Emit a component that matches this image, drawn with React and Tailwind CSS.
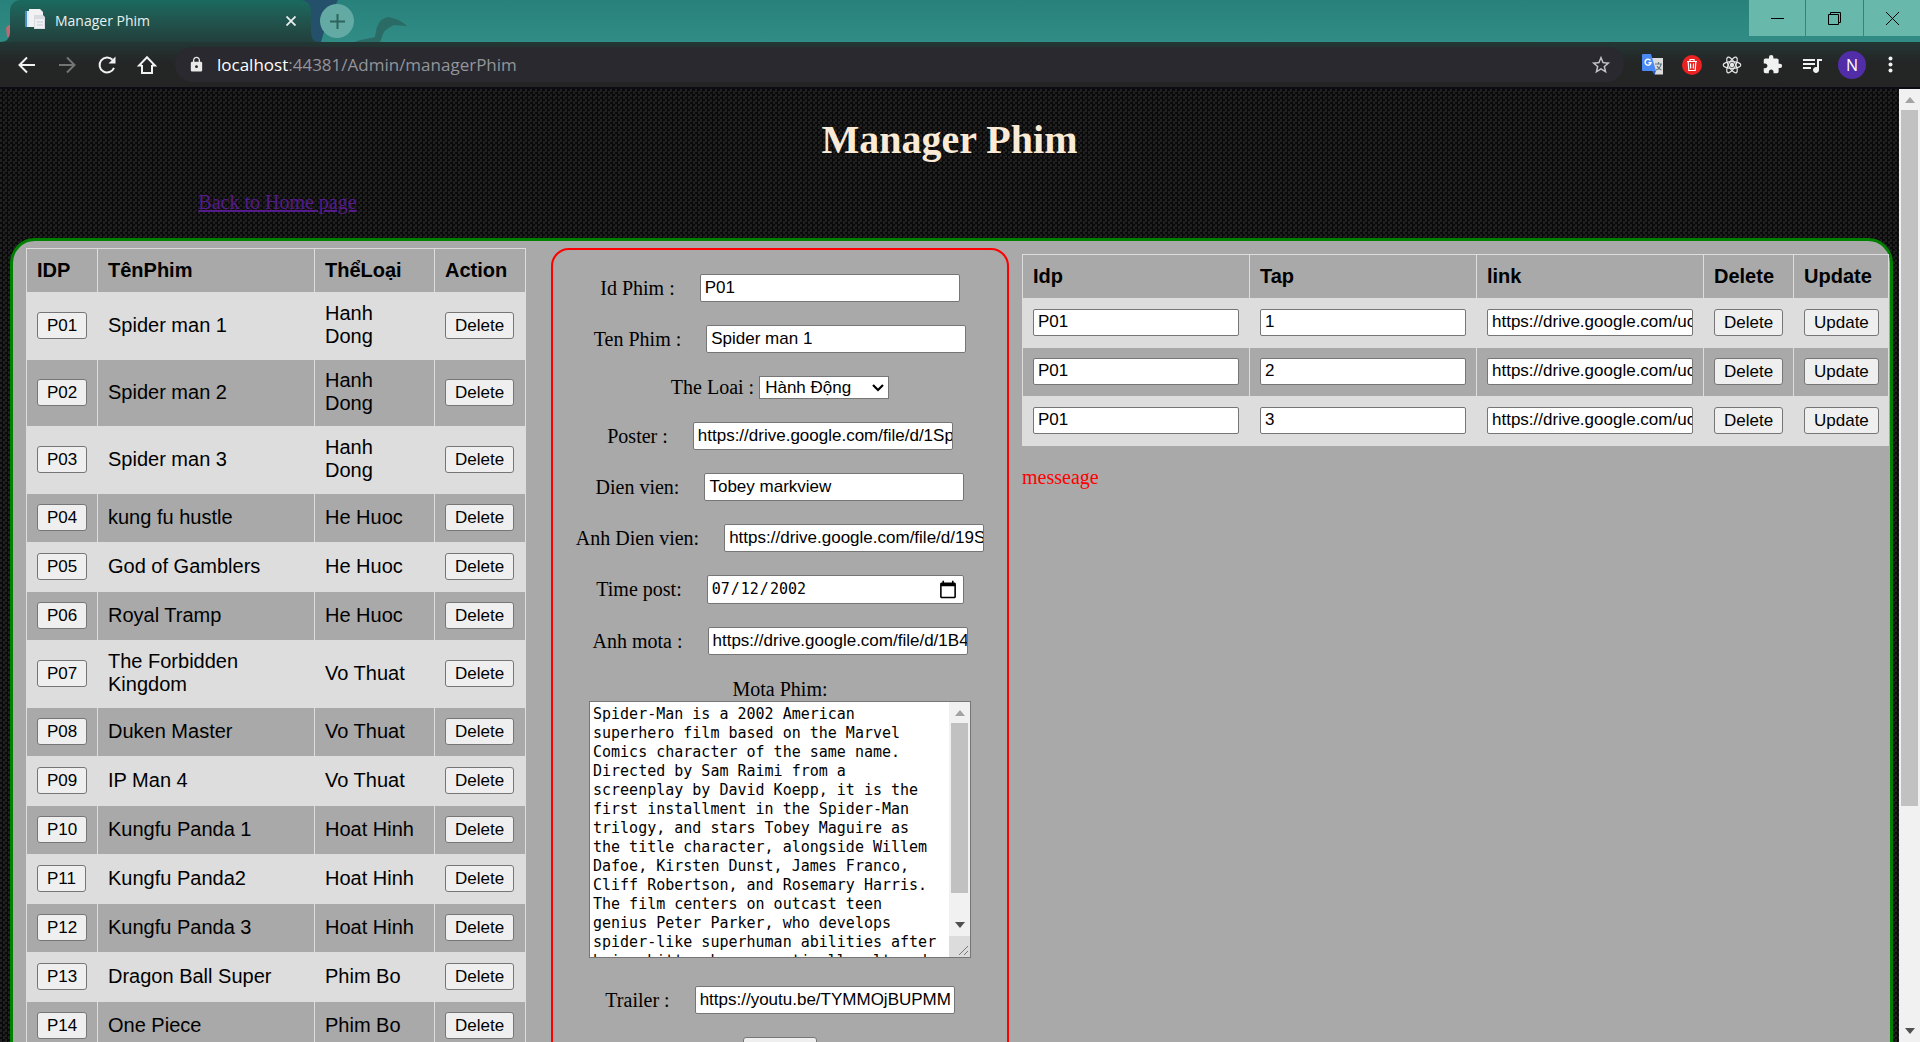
import React from "react";
import { MdExtension, MdQueueMusic, MdStarBorder, MdLock } from "react-icons/md";

const movies = [
  ["P01", "Spider man 1", "Hanh Dong"],
  ["P02", "Spider man 2", "Hanh Dong"],
  ["P03", "Spider man 3", "Hanh Dong"],
  ["P04", "kung fu hustle", "He Huoc"],
  ["P05", "God of Gamblers", "He Huoc"],
  ["P06", "Royal Tramp", "He Huoc"],
  ["P07", "The Forbidden Kingdom", "Vo Thuat"],
  ["P08", "Duken Master", "Vo Thuat"],
  ["P09", "IP Man 4", "Vo Thuat"],
  ["P10", "Kungfu Panda 1", "Hoat Hinh"],
  ["P11", "Kungfu Panda2", "Hoat Hinh"],
  ["P12", "Kungfu Panda 3", "Hoat Hinh"],
  ["P13", "Dragon Ball Super", "Phim Bo"],
  ["P14", "One Piece", "Phim Bo"],
];

const episodes = ["1", "2", "3"];

const description =
  "Spider-Man is a 2002 American superhero film based on the Marvel Comics character of the same name. Directed by Sam Raimi from a screenplay by David Koepp, it is the first installment in the Spider-Man trilogy, and stars Tobey Maguire as the title character, alongside Willem Dafoe, Kirsten Dunst, James Franco, Cliff Robertson, and Rosemary Harris. The film centers on outcast teen genius Peter Parker, who develops spider-like superhuman abilities after being bitten by a genetically altered spider.";

const arial = "font-['Liberation_Sans',Arial,sans-serif]";

function PushButton({ children }) {
  return (
    <button
      type="button"
      className="h-[27px] whitespace-nowrap rounded-[3px] border border-[#767676] bg-[#efefef] px-[9px] font-['Liberation_Sans',Arial,sans-serif] text-[17px] leading-[23px] text-black"
    >
      {children}
    </button>
  );
}

function TextInput({ className, ...rest }) {
  return (
    <input
      type="text"
      className={
        "rounded-[2px] border border-[#767676] bg-white pl-1 pr-0 font-['Liberation_Sans',Arial,sans-serif] text-[17px] leading-[23px] text-black " +
        className
      }
      {...rest}
    />
  );
}

function Field({ id, label, value }) {
  return (
    <div className="flex items-center justify-center gap-[25px]">
      <label htmlFor={id}>{label}</label>
      <TextInput id={id} defaultValue={value} className="h-7 w-[260px]" />
    </div>
  );
}

function Arrow({ up, className }) {
  return (
    <svg viewBox="0 0 10 6" className={"h-[6px] w-[10px] " + className} fill="currentColor" aria-hidden="true">
      <path d={up ? "M0 6 5 0l5 6z" : "M0 0h10L5 6z"} />
    </svg>
  );
}

function TabStrip() {
  return (
    <div className="relative flex h-[42px] shrink-0 items-start justify-between overflow-hidden bg-linear-to-b from-[#28827b] to-[#308c85]">
      <svg className="absolute left-0 top-0 h-[42px] w-[420px]" viewBox="0 0 420 42" aria-hidden="true">
        <path d="M300 0h38l-7 14-6 14-4 14h-21z" fill="#24506b" />
        <path d="M355 42c6-3 13-3 20-5 1-5 1-8 3-12 2-5 6-7 10-8 7 1 14 4 19 9-4 0-9-1-13-1-4 2-8 4-10 7-2 3-2 6-4 10z" fill="#2b6b66" />
        <path d="M6 28c2-3 3-3 4-3v12H7z" fill="#bb6b75" />
      </svg>
      <div className="relative flex">
        <svg className="h-[42px] w-[10px]" viewBox="0 0 10 42" aria-hidden="true">
          <path d="M0 42c7 0 10-4 10-10v10z" fill="#21443f" />
        </svg>
        <div className="flex h-[42px] w-[301px] items-center rounded-t-[10px] bg-linear-to-b from-[#1a6a60] to-[#223f3c] pb-1 pl-[15px] pr-2.5">
          <svg className="h-5 w-5" viewBox="0 0 20 20" aria-hidden="true">
            <path d="M0 2h5v16H0z" fill="#4d8fc7" />
            <path d="M1 2h3v16H1z" fill="#dceaf5" />
            <path d="M0 2h2v16H0z" fill="#4d8fc7" />
            <path d="M4 0h11l3 3v15H4z" fill="#f2f2f2" />
            <path d="M9 6h9l2 2v12H9z" fill="#d9dbe2" />
            <path d="M10 10h9v9h-9z" fill="#eef0f4" />
            <path d="M12 13h6M12 16h6" stroke="#c9ccd6" />
          </svg>
          <span className="ml-2.5 flex-1 pt-1 text-sm leading-5 text-[#e8f0ee]">Manager Phim</span>
          <button type="button" aria-label="Close tab" className="flex h-5 w-5 items-center justify-center pt-1 text-[#e8f0ee]">
            <svg className="h-[10px] w-[10px]" viewBox="0 0 10 10" stroke="currentColor" strokeWidth="1.8" aria-hidden="true">
              <path d="M.5.5l9 9M9.500.5l-9 9" />
            </svg>
          </button>
        </div>
        <svg className="h-[42px] w-[9px]" viewBox="0 0 9 42" aria-hidden="true">
          <path d="M0 32c0 7 3 10 9 10H0z" fill="#21443f" />
        </svg>
        <button type="button" aria-label="New tab" className="mt-1 flex h-[34px] w-[34px] items-center justify-center rounded-full bg-[#64aaa4] text-[#2d625d]">
          <svg className="h-[15px] w-[15px]" viewBox="0 0 15 15" stroke="currentColor" strokeWidth="2" aria-hidden="true">
            <path d="M7.500 0v15M0 7.500h15" />
          </svg>
        </button>
      </div>
      <div className="relative flex h-9 gap-px text-black">
        <button type="button" aria-label="Minimize" className="flex w-14 items-center justify-center bg-[#68b9ab]">
          <svg className="h-[13px] w-[13px]" viewBox="0 0 13 13" stroke="currentColor" aria-hidden="true"><path d="M0 6.500h13" /></svg>
        </button>
        <button type="button" aria-label="Restore" className="flex w-[57px] items-center justify-center bg-[#68b9ab]">
          <svg className="h-[13px] w-[13px]" viewBox="0 0 13 13" fill="none" stroke="currentColor" aria-hidden="true"><path d="M.5 2.500h10v10H.5zM2.500 2.500v-2h10v10h-2" /></svg>
        </button>
        <button type="button" aria-label="Close" className="flex w-14 items-center justify-center bg-[#68b9ab]">
          <svg className="h-[13px] w-[13px]" viewBox="0 0 13 13" stroke="currentColor" aria-hidden="true"><path d="M0 0l13 13M13 0L0 13" /></svg>
        </button>
      </div>
    </div>
  );
}

function NavIcon({ label, children, className }) {
  return (
    <button type="button" aria-label={label} className={"flex h-10 w-10 items-center justify-center " + className}>
      <svg className="h-5 w-5" viewBox="0 0 20 20" fill="none" stroke="currentColor" strokeWidth="2" aria-hidden="true">
        {children}
      </svg>
    </button>
  );
}

function Toolbar() {
  return (
    <div className="flex h-[47px] shrink-0 items-center border-b-2 border-[#0c0c12] bg-linear-to-b from-[#223735] via-[#242626] via-45% to-[#242424] pl-[7px] pr-3 text-[#f1f1f1]">
      <NavIcon label="Back" className="text-[#f1f1f1]"><path d="M18 10H3M10 2.500 2.500 10l7.500 7.500" /></NavIcon>
      <NavIcon label="Forward" className="text-[#747474]"><path d="M2 10h15M10 2.500l7.500 7.500-7.500 7.500" /></NavIcon>
      <NavIcon label="Reload" className="text-[#f1f1f1]">
        <path d="M17 12.800A7.500 7.500 0 1 1 15.500 4.800" />
        <path d="M18.500 1.500v7h-7z" fill="currentColor" stroke="none" />
      </NavIcon>
      <NavIcon label="Home" className="text-[#f1f1f1]"><path d="M5 10v8h10v-8M5 10.500H2L10 2.200l8 8.300h-3" /></NavIcon>
      <div className="ml-2 flex h-[35px] flex-1 items-center rounded-full bg-[#29292f] pl-[13px] pr-3">
        <MdLock className="h-[17px] w-[17px] text-[#e8e8e8]" />
        <div className="ml-3 flex-1 text-[17px] leading-6 text-[#93959a]">
          <span className="text-white">localhost</span>:44381/Admin/managerPhim
        </div>
        <button type="button" aria-label="Bookmark"><MdStarBorder className="h-[22px] w-[22px] text-[#c4c4c8]" /></button>
      </div>
      <div className="ml-2 flex items-center">
        <button type="button" aria-label="Translate" className="flex h-10 w-10 items-center justify-center">
          <svg className="h-[21px] w-[21px]" viewBox="0 0 21 21" aria-hidden="true">
            <path d="M9 4h12v16.500h-8z" fill="#dcdcdc" />
            <path d="M13 10h7M16.500 8v2M14 16c3-1 4.500-3 5-6M15 12c1 2 2.500 3.500 4.500 4" stroke="#60747f" strokeWidth="1.200" fill="none" />
            <path d="M0 1q0-1 1-1h8l5 17H1q-1 0-1-1z" fill="#4a8af4" />
            <path d="M10 17h4l-1.500 4z" fill="#3060c0" />
            <path d="M8.500 6.500A3 3 0 1 0 9 8.700H6.500" stroke="#fff" strokeWidth="1.400" fill="none" />
          </svg>
        </button>
        <button type="button" aria-label="Clear data" className="flex h-10 w-10 items-center justify-center">
          <svg className="h-5 w-5" viewBox="0 0 20 20" aria-hidden="true">
            <circle cx="10" cy="10" r="10" fill="#ea2222" />
            <path d="M5 6.500h10M8 6V4.500h4V6M6.200 7l.6 8.500h6.400l.6-8.500M8.500 8.500l.2 5M11.500 8.500l-.2 5" stroke="#fff" strokeWidth="1.200" fill="none" />
          </svg>
        </button>
        <button type="button" aria-label="React tools" className="flex h-10 w-10 items-center justify-center">
          <svg className="h-5 w-5" viewBox="0 0 20 20" fill="none" stroke="#e6e6e6" strokeWidth="1.200" aria-hidden="true">
            <ellipse cx="10" cy="10" rx="8.800" ry="3.400" />
            <ellipse cx="10" cy="10" rx="8.800" ry="3.400" transform="rotate(60 10 10)" />
            <ellipse cx="10" cy="10" rx="8.800" ry="3.400" transform="rotate(120 10 10)" />
            <circle cx="10" cy="10" r="1.600" fill="#e6e6e6" />
          </svg>
        </button>
        <button type="button" aria-label="Extensions" className="flex h-10 w-10 items-center justify-center">
          <MdExtension className="h-[21px] w-[21px]" />
        </button>
        <button type="button" aria-label="Media" className="flex h-10 w-10 items-center justify-center">
          <MdQueueMusic className="h-6 w-6" />
        </button>
        <button type="button" className="mx-1.5 flex h-7 w-7 items-center justify-center rounded-full bg-[#512da8] text-base leading-none text-white">N</button>
        <button type="button" aria-label="Menu" className="flex h-10 w-9 items-center justify-center">
          <svg className="h-[17px] w-[5px]" viewBox="0 0 5 17" fill="currentColor" aria-hidden="true">
            <circle cx="2.500" cy="2.500" r="2" /><circle cx="2.500" cy="8.500" r="2" /><circle cx="2.500" cy="14.500" r="2" />
          </svg>
        </button>
      </div>
    </div>
  );
}

const th = "border border-[#ddd] px-2.5 text-left font-bold leading-[23px]";
const td = "border border-[#ddd] px-2.5 pb-0.5 leading-[23px]";
const tdText = "border border-[#ddd] pl-2.5 pt-[9px] pb-[11px] leading-[23px]";

function MovieTable() {
  return (
    <table className={"w-full table-fixed border-collapse text-xl " + arial}>
      <colgroup>
        <col className="w-[71px]" />
        <col />
        <col className="w-[120px]" />
        <col className="w-[91px]" />
      </colgroup>
      <thead>
        <tr className="h-11">
          <th className={th}>IDP</th>
          <th className={th}>TênPhim</th>
          <th className={th}>ThểLoại</th>
          <th className={th}>Action</th>
        </tr>
      </thead>
      <tbody>
        {movies.map(([id, name, kind]) => (
          <tr key={id} className="h-[49px] odd:bg-[#ddd]">
            <td className={td}><div className="flex"><PushButton>{id}</PushButton></div></td>
            <td className={tdText + " pr-10"}>{name}</td>
            <td className={tdText + " pr-2.5"}>{kind}</td>
            <td className={td}><div className="flex"><PushButton>Delete</PushButton></div></td>
          </tr>
        ))}
      </tbody>
    </table>
  );
}

function MovieForm() {
  return (
    <form className="flex h-full flex-col gap-[23px] rounded-[18px] border-2 border-[red] pb-6 pt-6">
      <Field id="idphim" label="Id Phim :" value="P01" />
      <Field id="tenphim" label="Ten Phim :" value="Spider man 1" />
      <div className="flex items-center justify-center gap-[5px]">
        <label htmlFor="theloai">The Loai :</label>
        <div className="relative flex">
          <select
            id="theloai"
            className="h-[23px] w-[130px] appearance-none border border-[#767676] bg-white pl-[5px] font-['Liberation_Sans',Arial,sans-serif] text-[17px] leading-5 text-black"
          >
            <option>Hành Động</option>
            <option>Hoạt Hình</option>
          </select>
          <svg className="pointer-events-none absolute right-[5px] top-2 h-2 w-3" viewBox="0 0 12 8" fill="none" stroke="#000" strokeWidth="2.200" aria-hidden="true">
            <path d="M1 1l5 5 5-5" />
          </svg>
        </div>
      </div>
      <Field id="poster" label="Poster :" value="https://drive.google.com/file/d/1Sp" />
      <Field id="dienvien" label="Dien vien:" value="Tobey markview" />
      <Field id="anhdienvien" label="Anh Dien vien:" value="https://drive.google.com/file/d/19S" />
      <div className="flex items-center justify-center gap-[25px]">
        <label htmlFor="timepost">Time post:</label>
        <input
          id="timepost"
          type="date"
          defaultValue="2002-07-12"
          className="h-[29px] w-[257px] rounded-[2px] border border-[#767676] bg-white pl-[3px] pr-[5px] font-['DejaVu_Sans_Mono',monospace] text-[15px] text-black [&::-webkit-calendar-picker-indicator]:h-5 [&::-webkit-calendar-picker-indicator]:w-5 [&::-webkit-calendar-picker-indicator]:p-0"
        />
      </div>
      <Field id="anhmota" label="Anh mota :" value="https://drive.google.com/file/d/1B4" />
      <div className="flex flex-col items-center">
        <label htmlFor="mota">Mota Phim:</label>
        <div className="flex h-[257px] w-[382px] border border-[#767676] bg-white">
          <textarea
            id="mota"
            defaultValue={description}
            className="h-full flex-1 resize-none overflow-hidden pl-[3px] pr-2 pt-[3px] font-['DejaVu_Sans_Mono',monospace] text-[15px] leading-[19px] text-black"
          />
          <div className="flex w-[21px] flex-col items-center bg-[#f1f1f1]" aria-hidden="true">
            <div className="flex h-[21px] items-center"><Arrow up className="text-[#a3a3a3]" /></div>
            <div className="h-[170px] w-[17px] bg-[#c1c1c1]" />
            <div className="flex flex-1 items-end pb-2"><Arrow className="text-[#505050]" /></div>
            <svg className="h-[21px] w-[21px] bg-[#dcdcdc]" viewBox="0 0 21 21" stroke="#777">
              <path d="M10 19l9-9M15 19l4-4" />
            </svg>
          </div>
        </div>
      </div>
      <div className="mt-[5px]">
        <Field id="trailer" label="Trailer :" value="https://youtu.be/TYMMOjBUPMM" />
      </div>
      <div className="flex justify-center">
        <button type="submit" aria-label="Submit" className="h-[27px] w-[74px] rounded-[3px] border border-[#767676] bg-[#efefef]" />
      </div>
    </form>
  );
}

function EpisodeTable() {
  return (
    <table className={"w-full table-fixed border-collapse text-xl " + arial}>
      <colgroup>
        <col />
        <col />
        <col />
        <col className="w-[90px]" />
        <col className="w-[95px]" />
      </colgroup>
      <thead>
        <tr className="h-11">
          <th className={th}>Idp</th>
          <th className={th}>Tap</th>
          <th className={th}>link</th>
          <th className={th}>Delete</th>
          <th className={th}>Update</th>
        </tr>
      </thead>
      <tbody>
        {episodes.map((n) => (
          <tr key={n} className="h-[49px] odd:bg-[#ddd]">
            <td className={td}><div className="flex"><TextInput aria-label="Idp" defaultValue="P01" className="h-[27px] w-full" /></div></td>
            <td className={td}><div className="flex"><TextInput aria-label="Tap" defaultValue={n} className="h-[27px] w-full" /></div></td>
            <td className={td}><div className="flex"><TextInput aria-label="link" defaultValue="https://drive.google.com/uc" className="h-[27px] w-full" /></div></td>
            <td className={td}><div className="flex"><PushButton>Delete</PushButton></div></td>
            <td className={td}><div className="flex"><PushButton>Update</PushButton></div></td>
          </tr>
        ))}
      </tbody>
    </table>
  );
}

export default function App() {
  return (
    <div className="flex h-screen flex-col overflow-hidden font-['Open_Sans','Noto_Sans',sans-serif]">
      <TabStrip />
      <Toolbar />
      <div className="flex min-h-0 flex-1">
        <main className="min-w-0 flex-1 overflow-hidden bg-[conic-gradient(#0a0a0a_25%,#202020_0_50%,#0a0a0a_0_75%,#202020_0)] bg-[length:5px_5px] pl-2.5 pr-1.5 font-['Liberation_Serif','Times_New_Roman',serif] text-xl leading-[23px] text-black">
          <h1 className="pr-1 pt-7 text-center text-[40px] font-bold leading-[46px] text-[antiquewhite]">Manager Phim</h1>
          <a href="#home" className="ml-[10%] mt-7 inline-block text-[#551a8b] underline">Back to Home page</a>
          <div className="mt-6 grid grid-cols-[500fr_496fr_867fr] rounded-[25px] border-[3px] border-[green] bg-[darkgray] pl-[13px] pr-px pt-[7px]">
            <section><MovieTable /></section>
            <section className="ml-[25px] mr-[13px]"><MovieForm /></section>
            <section className="pt-1.5">
              <EpisodeTable />
              <p className="mt-5 text-[red]">messeage</p>
            </section>
          </div>
        </main>
        <div className="flex w-[21px] flex-col items-center bg-[#f1f1f1]" aria-hidden="true">
          <div className="flex h-[21px] shrink-0 items-center"><Arrow up className="text-[#a3a3a3]" /></div>
          <div className="h-[73%] w-[17px] bg-[#c1c1c1]" />
          <div className="flex flex-1 items-end pb-2"><Arrow className="text-[#505050]" /></div>
        </div>
      </div>
    </div>
  );
}
